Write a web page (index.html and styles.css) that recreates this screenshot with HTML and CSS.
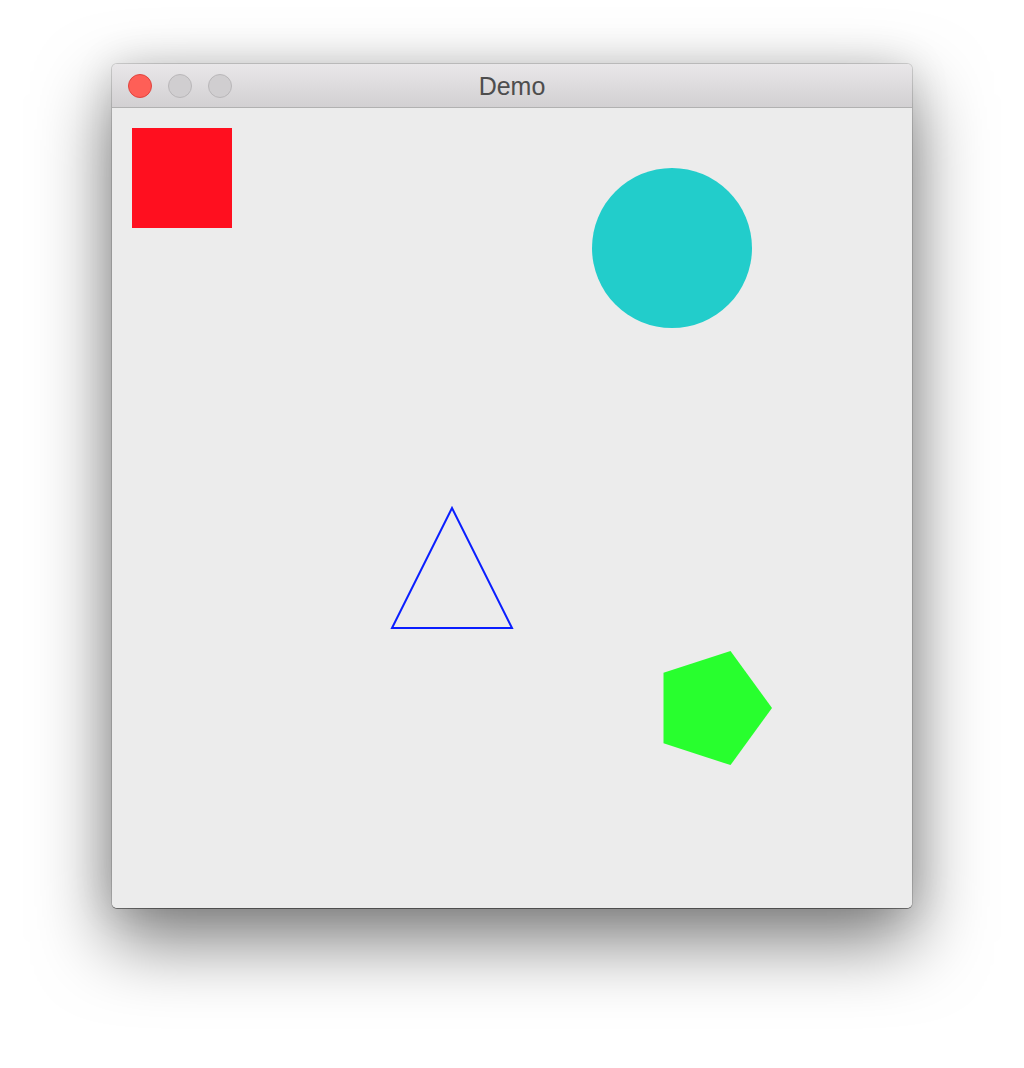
FILE: index.html
```html
<!DOCTYPE html>
<html>
<head>
<meta charset="utf-8">
<link rel="stylesheet" href="styles.css">
</head>
<body>
<div class="window">
  <div class="titlebar">
    <div class="lights">
      <span class="light close"></span>
      <span class="light"></span>
      <span class="light"></span>
    </div>
    <div class="title">Demo</div>
  </div>
  <div class="canvas">
    <svg width="800" height="800" viewBox="0 0 800 800">
      <rect x="20" y="20" width="100" height="100" fill="#ff0f1f"/>
      <circle cx="560" cy="140" r="80" fill="#22cdcb"/>
      <polygon points="340,400 400,520 280,520" fill="none" stroke="#0a1eff" stroke-width="2"/>
      <polygon points="660,600 618.5,657.1 551.5,635.3 551.5,564.7 618.5,542.9" fill="#28ff2e"/>
    </svg>
  </div>
</div>
</body>
</html>
```

FILE: styles.css
```css
html, body {
  margin: 0;
  padding: 0;
  background: #ffffff;
}
body {
  width: 1024px;
  height: 1068px;
  overflow: hidden;
  padding-top: 64px;
  box-sizing: border-box;
}
.window {
  margin-left: 112px;
  width: 800px;
  border-radius: 5px;
  overflow: hidden;
  box-shadow: 0 1px 0 0 rgba(0, 0, 0, 0.35), 0 0 0 1px rgba(0, 0, 0, 0.14), 0 32px 72px 2px rgba(0, 0, 0, 0.5), 0 0 40px rgba(0, 0, 0, 0.12);
  background: #ececec;
}
.titlebar {
  height: 43px;
  background: linear-gradient(#e9e7e9, #d2d0d2);
  border-bottom: 1px solid #b1b1b1;
  display: flex;
  align-items: center;
  position: relative;
}
.lights {
  display: flex;
  gap: 16px;
  padding-left: 16px;
  margin-top: 1px;
}
.light {
  width: 24px;
  height: 24px;
  border-radius: 50%;
  box-sizing: border-box;
  background: #d0ced0;
  border: 1px solid #b9b7b9;
}
.light.close {
  background: #fe5f57;
  border-color: #e0443e;
}
.title {
  position: absolute;
  left: 0;
  right: 0;
  top: 2px;
  bottom: 0;
  display: flex;
  align-items: center;
  justify-content: center;
  font-family: "Liberation Sans", Arial, sans-serif;
  font-size: 25px;
  color: #4d4d4d;
}
.canvas {
  height: 800px;
  background: #ececec;
}
.canvas svg {
  display: block;
}
```
